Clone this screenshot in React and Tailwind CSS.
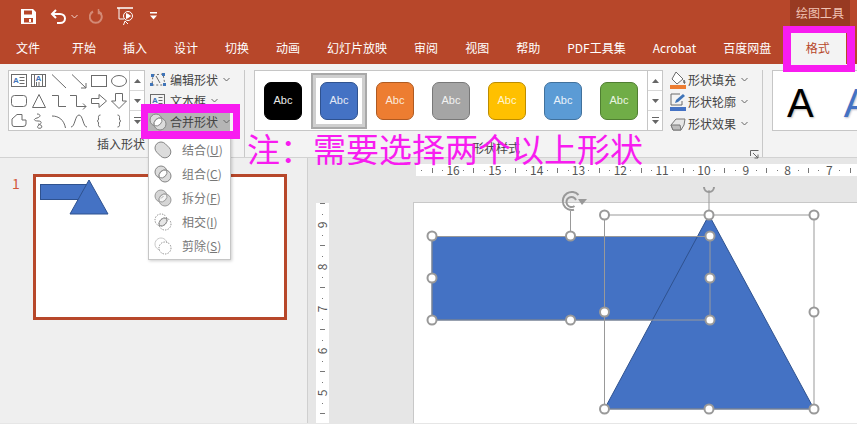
const tabs = ['开始', '插入', '设计', '切换', '动画', '幻灯片放映', '审阅', '视图', '帮助', 'PDF工具集', 'Acrobat', '百度网盘'];

const styleButtons = [
  { bg: 'bg-black border-black text-[#e8e8e8]' },
  { bg: 'bg-[#4472c4] border-[#2f528f] text-[#e4e9f5]', selected: true },
  { bg: 'bg-[#ed7d31] border-[#ae5a21] text-[#fbe9dc]' },
  { bg: 'bg-[#a5a5a5] border-[#787878] text-[#f2f2f2]' },
  { bg: 'bg-[#ffc000] border-[#bc8c00] text-[#fff5d0]' },
  { bg: 'bg-[#5b9bd5] border-[#41719c] text-[#e8f1fa]' },
  { bg: 'bg-[#70ad47] border-[#507e32] text-[#eaf4e2]' },
];

function Chevron({ className = '' }) {
  return (
    <svg width="7" height="5" viewBox="0 0 7 5" className={className}>
      <path d="M0.5 1 L3.5 4 L6.5 1" fill="none" stroke="#666" strokeWidth="1" />
    </svg>
  );
}

function Shape({ children }) {
  return (
    <div className="w-5 h-[20px] flex items-center justify-center">
      <svg width="20" height="20" viewBox="0 0 20 20" fill="none" stroke="#6b6b6b" strokeWidth="1">
        {children}
      </svg>
    </div>
  );
}

const galleryShapes = [
  <>
    <rect x="2.5" y="3.5" width="15" height="12" />
    <text x="4" y="12" fontSize="8" fontWeight="700" fill="#3f74b8" stroke="none" fontFamily="Liberation Sans">A</text>
    <path d="M10.5 6.5h5M10.5 9.5h5M10.5 12.5h5" />
  </>,
  <>
    <rect x="2.5" y="3.5" width="14" height="12" />
    <text x="6.5" y="10" fontSize="8" fontWeight="700" fill="#3f74b8" stroke="none" fontFamily="Liberation Sans">A</text>
    <path d="M5.5 4v11M7.5 11v4M10 11v4M13.5 4v11" />
  </>,
  <path d="M3 3.5 L17 17" />,
  <>
    <path d="M3 3.5 L17 17" />
    <path d="M17 12 V17 H12" />
  </>,
  <rect x="2.5" y="4.5" width="15" height="11" />,
  <ellipse cx="10" cy="10" rx="7.5" ry="5.5" />,
  <rect x="2.5" y="4.5" width="15" height="11" rx="3" />,
  <path d="M10 3.5 L16.5 16.5 H3.5 Z" />,
  <path d="M3 4.5 H9.5 V15.5 H17" />,
  <>
    <path d="M1 4.5 H7.5 V15.5 H17" />
    <path d="M14 12.5 L17 15.5 L14 18.5" />
  </>,
  <path d="M2.5 7.5 H10 V3.5 L17.5 10 L10 16.5 V12.5 H2.5 Z" />,
  <path d="M6.5 2.5 H13.5 V10 H17.5 L10 17.5 L2.5 10 H6.5 Z" />,
  <path d="M3 8 L8 3.5 H13 V9 H17 V13 Q17 15.5 14 15.5 H5 Q3 15.5 3 13 Z" />,
  <path d="M8 3 C12 3 12 6 8 7 C4 8 5 10 9 10 C13 10 13 12 10 14 C7 16 9 18 12 17 C14 16 12 13 9 13" />,
  <path d="M3 5 C10 5 15 9 16.5 17" />,
  <path d="M2 16 C6 16 6 4 10 4 C14 4 14 16 18 16" />,
  <path d="M11.5 4 C9 4 9.5 6 9.5 8 C9.5 9.5 8.5 10 8 10 C8.5 10 9.5 10.5 9.5 12 C9.5 14 9 16 11.5 16" />,
  <path d="M8.5 4 C11 4 10.5 6 10.5 8 C10.5 9.5 11.5 10 12 10 C11.5 10 10.5 10.5 10.5 12 C10.5 14 11 16 8.5 16" />,
];

function ScrollColumn() {
  return (
    <div className="w-[15px] h-[61px] flex flex-col border border-[#c6c6c6] border-l-0 bg-white">
      <div className="h-[20px] flex items-center justify-center border-b border-[#d8d8d8]">
        <svg width="7" height="4" viewBox="0 0 7 4"><path d="M3.5 0 L7 4 H0 Z" fill="#666" /></svg>
      </div>
      <div className="h-[20px] flex items-center justify-center border-b border-[#d8d8d8]">
        <svg width="7" height="4" viewBox="0 0 7 4"><path d="M0 0 H7 L3.5 4 Z" fill="#666" /></svg>
      </div>
      <div className="flex-1 flex flex-col items-center justify-center gap-[2px]">
        <div className="w-[7px] h-px bg-[#666]" />
        <svg width="7" height="4" viewBox="0 0 7 4"><path d="M0 0 H7 L3.5 4 Z" fill="#666" /></svg>
      </div>
    </div>
  );
}

function CommandRow({ icon, label, className = '', gap = 'mr-[3px]' }) {
  return (
    <div className={`h-[21px] flex items-center ${className}`}>
      <div className={`w-[19px] flex justify-center ${gap}`}>{icon}</div>
      <span className="text-xs text-[#444] whitespace-nowrap leading-none">{label}</span>
      <Chevron className="ml-[5px]" />
    </div>
  );
}

const lens = 'M12.74 5.26 A6 6 0 0 1 5.26 12.74 A6 6 0 0 1 12.74 5.26 Z';

function MergeIcon({ variant }) {
  const left = { cx: 7, cy: 7, r: 6 };
  const right = { cx: 11, cy: 11, r: 6 };
  return (
    <svg width="18" height="18" viewBox="0 0 18 18" fill="none" stroke="#858585" strokeWidth="1">
      {variant === 'union' && (
        <path d="M2.76 2.76 A6 6 0 0 1 11.24 2.76 L15.24 6.76 A6 6 0 0 1 6.76 15.24 L2.76 11.24 A6 6 0 0 1 2.76 2.76 Z" fill="#dcdcdc" />
      )}
      {variant === 'combine' && (
        <>
          <circle {...left} fill="#dcdcdc" />
          <circle {...right} fill="#dcdcdc" />
          <path d={lens} fill="#fff" />
        </>
      )}
      {variant === 'split' && (
        <>
          <circle {...left} fill="#d6d6d6" stroke="#999" />
          <circle {...right} fill="#d6d6d6" stroke="#999" />
          <path d={lens} fill="#f4f4f4" stroke="#999" />
          <path d="M7 9.5 L9.5 7" stroke="#aaa" />
        </>
      )}
      {variant === 'intersect' && (
        <>
          <circle {...left} strokeDasharray="1.3 1.3" />
          <circle {...right} strokeDasharray="1.3 1.3" />
          <path d={lens} fill="#e6e6e6" />
        </>
      )}
      {variant === 'subtract' && (
        <>
          <path d="M5.26 12.74 A6 6 0 1 1 12.74 5.26" stroke="#c8c8c8" />
          <circle {...right} strokeDasharray="1.3 1.3" />
        </>
      )}
    </svg>
  );
}

const mergeItems = [
  ['union', '结合', 'U'],
  ['combine', '组合', 'C'],
  ['split', '拆分', 'F'],
  ['intersect', '相交', 'I'],
  ['subtract', '剪除', 'S'],
];

const hHandles = [
  [432, 236], [570.5, 236], [710, 236], [432, 278], [710, 278], [432, 320], [570.5, 320], [710, 320],
  [604.5, 215], [709, 215], [814, 215], [604.5, 312], [814, 312], [604.5, 409], [709, 409], [814, 409],
];

function HTicks() {
  return (
    <>
      <div className="ml-[3.2px] w-px h-px bg-[#777]" />
      <div className="ml-[9.475px] w-px h-[5px] bg-[#777]" />
      <div className="ml-[9.475px] w-px h-px bg-[#777]" />
    </>
  );
}

function HorizontalRuler() {
  const numbers = [16, 15, 14, 13, 12, 11, 10, 9, 8, 7];
  return (
    <div className="ml-[108px] mt-[6px] h-[13px] bg-white flex items-center pl-[2px] text-xs text-[#555] leading-none">
      {numbers.map((n) => (
        <div key={n} className="flex items-center shrink-0">
          <HTicks />
          <div className="ml-[3.2px] w-[13.5px] text-center">{n}</div>
        </div>
      ))}
      <div className="ml-[3.2px] w-px h-px bg-[#777] shrink-0" />
      <div className="ml-[9.475px] w-px h-[5px] bg-[#777] shrink-0" />
    </div>
  );
}

function VerticalRuler() {
  const numbers = [9, 8, 7, 6, 5];
  return (
    <div className="w-[13px] h-[220px] bg-white flex flex-col items-center text-xs text-[#555] leading-none">
      {numbers.map((n) => (
        <div key={n} className="shrink-0 flex flex-col items-center">
          <div className="h-px w-[5px] bg-[#777]" />
          <div className="mt-[9.5px] h-px w-px bg-[#777]" />
          <div className="mt-1 h-3 -rotate-90">{n}</div>
          <div className="mt-1 h-px w-px bg-[#777]" />
          <div className="h-[9.5px]" />
        </div>
      ))}
      <div className="h-px w-[5px] bg-[#777] shrink-0" />
    </div>
  );
}

export default function App() {
  return (
    <div className="relative w-[857px] h-[424px] overflow-hidden bg-[#e6e6e6] font-['Noto_Sans_CJK_SC','Liberation_Sans',sans-serif]">
      {/* Title bar */}
      <div className="h-8 bg-[#b7472a] flex items-start justify-between">
        <div className="flex items-center h-8 pl-[21px]">
          <svg width="15" height="15" viewBox="0 0 15 15">
            <path fillRule="evenodd" d="M0 0 H12 L15 3 V15 H0 Z M3 1.5 V5.5 H11 V1.5 Z M3 9 V13.5 H12 V9 Z" fill="#fff" />
            <rect x="8" y="10" width="2" height="3" fill="#fff" />
          </svg>
          <svg width="16" height="15" viewBox="0 0 16 15" fill="none" stroke="#fff" strokeWidth="2" className="ml-[14px]">
            <path d="M6 1 L2 5 L6 9" />
            <path d="M2 5 H10 C13 5 15 7 15 9.5 C15 12 13 14 10 14 H7" />
          </svg>
          <svg width="7" height="5" viewBox="0 0 7 5" className="ml-[5px]">
            <path d="M0.5 1 L3.5 4 L6.5 1" fill="none" stroke="#f3d6cd" strokeWidth="1" />
          </svg>
          <svg width="14" height="15" viewBox="0 0 14 15" fill="none" stroke="#d38a76" strokeWidth="2" className="ml-[11px]">
            <path d="M4 2.5 A6 6 0 1 0 9.5 2.5" />
            <path d="M9.5 0 V4.5 H13" strokeWidth="1.5" />
          </svg>
          <svg width="17" height="19" viewBox="0 0 17 19" fill="none" stroke="#fff" strokeWidth="1" className="ml-[14px]">
            <path d="M0 1 H16" strokeWidth="1.5" />
            <path d="M2 1 V12 H7" />
            <circle cx="11" cy="9" r="4.5" />
            <path d="M9.5 6.5 L13.5 9 L9.5 11.5 Z" fill="#fff" />
            <path d="M8 14 L6.5 18 M8 14 L11 17" />
          </svg>
          <svg width="7" height="8" viewBox="0 0 7 8" className="ml-[16px]">
            <path d="M0 0 H7 V1.5 H0 Z M0 3.5 H7 L3.5 7.5 Z" fill="#fff" />
          </svg>
        </div>
        <div className="w-[60px] h-[26px] mr-[7px] bg-[#983a22] flex items-center justify-center text-xs text-[#f1c4b6] leading-none">
          绘图工具
        </div>
      </div>

      {/* Tabs */}
      <div className="h-8 bg-[#b7472a] flex items-center pl-4 text-xs text-white leading-none">
        <span>文件</span>
        <div className="flex items-center gap-[27px] ml-[32px]">
          {tabs.map((name) => (
            <span key={name} className="whitespace-nowrap">{name}</span>
          ))}
        </div>
        <div className="ml-[18px] w-[57px] h-8 bg-[#f3f3f3] text-[#b7472a] flex items-center justify-center">格式</div>
      </div>

      {/* Ribbon */}
      <div className="h-[94px] bg-[#f3f3f3] border-b border-[#d2d2d2] flex items-start pt-[6px] pl-2">
        <div className="w-[236px] h-[86px] flex flex-col">
          <div className="flex">
            <div className="flex">
              <div className="w-[122px] h-[61px] bg-white border border-[#c6c6c6] grid grid-cols-6 content-center">
                {galleryShapes.map((shape, i) => (
                  <Shape key={i}>{shape}</Shape>
                ))}
              </div>
              <ScrollColumn />
            </div>
            <div className="ml-[3px] flex flex-col -mt-[1px]">
              <CommandRow
                label="编辑形状"
                icon={
                  <svg width="16" height="14" viewBox="0 0 16 14" fill="none">
                    <path d="M3 2 L13 1 L15 12 L2 12 Z" stroke="#6b6b6b" strokeDasharray="2 2" />
                    <path d="M6 3 L10 10" stroke="#6b6b6b" />
                    <rect x="1" y="1" width="3" height="3" fill="#3f74b8" />
                    <rect x="12" y="0" width="3" height="3" fill="#3f74b8" />
                    <rect x="0" y="10" width="3" height="3" fill="#3f74b8" />
                    <rect x="13" y="10" width="3" height="3" fill="#3f74b8" />
                  </svg>
                }
              />
              <CommandRow
                label="文本框"
                icon={
                  <svg width="15" height="13" viewBox="0 0 15 13" fill="none" stroke="#6b6b6b">
                    <rect x="0.5" y="0.5" width="14" height="12" />
                    <text x="2" y="9" fontSize="8" fontWeight="700" fill="#3f74b8" stroke="none" fontFamily="Liberation Sans">A</text>
                    <path d="M8.5 3.5h4M8.5 6.5h4M8.5 9.5h4" />
                  </svg>
                }
              />
              <CommandRow
                className="bg-[#b5b5b5] !h-[19px] mt-px"
                label="合并形状"
                icon={<MergeIcon variant="combine" />}
              />
            </div>
          </div>
          <div className="w-[137px] flex justify-end mt-[1px] text-xs text-[#444] leading-[24px]">插入形状</div>
        </div>
        <div className="w-px h-[87px] bg-[#c8c8c8]" />

        <div className="w-[508px] h-[86px] ml-[9px] flex flex-col">
          <div className="flex">
            <div className="w-[394px] h-[61px] bg-white border border-[#c6c6c6] flex items-center">
              {styleButtons.map((b, i) => (
                <div
                  key={i}
                  className={`w-[56px] h-[56px] flex items-center justify-center shrink-0 ${
                    b.selected ? 'border-2 border-[#a9a9a9] outline outline-[3px] -outline-offset-[5px] outline-[#cfcfcf]' : ''
                  }`}
                >
                  <div
                    className={`w-[38px] h-[38px] rounded-[7px] border flex items-center justify-center text-[11px] font-['Liberation_Sans',sans-serif] ${b.bg}`}
                  >
                    Abc
                  </div>
                </div>
              ))}
            </div>
            <ScrollColumn />
            <div className="ml-[5px] flex flex-col -mt-[1px] gap-[1px]">
              <CommandRow
                gap="mr-px"
                label="形状填充"
                icon={
                  <svg width="16" height="18" viewBox="0 0 16 18" fill="none" stroke="#6b6b6b">
                    <path d="M6 1 L13 8 L7 13 L2 8 Z" fill="#fff" />
                    <path d="M14 9 C15 11 15.5 12 14.5 12.5 C13.5 12 13.5 11 14 9 Z" fill="#6b6b6b" />
                    <rect x="0" y="14" width="16" height="4" fill="#ed7d31" stroke="none" />
                  </svg>
                }
              />
              <CommandRow
                gap="mr-px"
                label="形状轮廓"
                icon={
                  <svg width="16" height="18" viewBox="0 0 16 18" fill="none">
                    <path d="M1 1 H10 M1 1 V12 H12 V8" stroke="#6b6b6b" />
                    <path d="M5 10 L6 7 L13 1 L15 3 L8 9 Z" fill="#3f74b8" />
                    <rect x="0" y="14" width="16" height="4" fill="#4472c4" />
                  </svg>
                }
              />
              <CommandRow
                gap="mr-px"
                label="形状效果"
                icon={
                  <svg width="16" height="14" viewBox="0 0 16 14">
                    <path d="M1 8 L6 2 H15 L14 8 L11 13 H3 Z" fill="#e6e6e6" stroke="#777" />
                    <path d="M3 13 L1 8 H10 L11 13 Z" fill="#bdbdbd" stroke="#777" />
                  </svg>
                }
              />
            </div>
          </div>
          <div className="relative w-[494px]">
            <div className="text-center pr-[10px] text-xs text-[#444] leading-[27px]">形状样式</div>
            <svg width="9" height="9" viewBox="0 0 9 9" fill="none" stroke="#666" className="absolute right-[-11px] top-[16px]">
              <path d="M0.5 6 V0.5 H8.5" />
              <path d="M3 3 L8 8 M8 4.5 V8 H4.5" />
            </svg>
          </div>
        </div>
        <div className="w-px h-[87px] bg-[#c8c8c8]" />

        <div className="ml-[9px] flex-1 h-[61px] bg-white border border-[#c6c6c6] border-r-0 flex items-center pt-[5px] overflow-hidden font-['Liberation_Sans',sans-serif] text-[40px] leading-none">
          <span className="ml-[14px] text-black [text-shadow:1px_1px_2px_#bbb]">A</span>
          <span className="ml-[30px] text-[#4472c4] [text-shadow:1px_1px_2px_#bbc]">A</span>
        </div>
      </div>

      {/* Workspace */}
      <div className="h-[265px] flex">
        <div className="w-[308px] bg-[#efefef] border-r border-[#cfcfcf] flex items-start pt-[16px] pl-[12px]">
          <span className="w-[21px] text-sm leading-[18px] text-[#d2583a]">1</span>
          <div className="w-[254px] h-[146px] bg-white border-[3px] border-[#b7472a]">
            <svg width="248" height="140" viewBox="0 0 248 140">
              <rect x="4.5" y="7.5" width="50" height="15" fill="#4472c4" stroke="#2f528f" />
              <path d="M53 3 L72 37 H34 Z" fill="#4472c4" stroke="#2f528f" />
            </svg>
          </div>
        </div>
        <div className="flex-1 flex flex-col min-w-0">
          <HorizontalRuler />
          <div className="flex flex-1 mt-[27px] pl-2">
            <VerticalRuler />
            <div className="ml-[84px] -mt-px flex-1 bg-white border-l border-t border-[#c8c8c8]" />
          </div>
        </div>
      </div>

      {/* Selected shapes on the slide */}
      <svg className="absolute left-0 top-0 pointer-events-none" width="857" height="424" viewBox="0 0 857 424">
        <rect x="432" y="236.5" width="278" height="83.5" fill="#4472c4" stroke="#2f528f" />
        <path d="M709 215 L814 409 H604.5 Z" fill="#4472c4" stroke="#2f528f" />
        <g fill="none" stroke="#999" strokeWidth="1">
          <rect x="432" y="236.5" width="278" height="83.5" />
          <rect x="604.5" y="215" width="209.5" height="194" />
          <path d="M570.5 211 V236 M709 190 V215" />
          <path d="M704 187 A5 5 0 0 0 714 187" strokeWidth="2" />
          <path d="M578.5 195 A9 9 0 1 0 574 209.7" strokeWidth="2" />
          <path d="M574.5 206 A5 5 0 1 1 576 200" strokeWidth="2" />
          <path d="M578 199 H587 L582 205 Z" fill="#999" stroke="none" />
        </g>
        {hHandles.map(([x, y]) => (
          <circle key={`${x}-${y}`} cx={x} cy={y} r="4.5" fill="#fff" stroke="#999" strokeWidth="2" />
        ))}
      </svg>

      {/* Merge shapes dropdown */}
      <div className="absolute left-[148px] top-[136px] w-[83px] h-[124px] bg-white border border-[#c6c6c6] shadow-[1px_1px_3px_rgba(0,0,0,0.2)] flex flex-col pt-px">
        {mergeItems.map(([variant, label, key]) => (
          <div key={key} className="h-6 flex items-center pl-[5px] text-xs text-[#777] leading-none">
            <MergeIcon variant={variant} />
            <span className="ml-[10px] whitespace-nowrap">
              {label}(<span className="underline">{key}</span>)
            </span>
          </div>
        ))}
      </div>

      {/* Annotation over the screenshot */}
      <div className="absolute left-[141px] top-[104px] w-[99px] h-[35px] border-x-[7px] border-t-[9px] border-b-[8px] border-[#f81cf0]" />
      <div className="absolute left-[783px] top-[26px] w-[72px] h-[46px] border-x-[8px] border-t-[7px] border-b-[7px] border-[#f81cf0]" />
      <div className="absolute left-[247px] top-[126px] text-[33px] leading-[44px] text-[#f81cf0] whitespace-nowrap">
        注：需要选择两个以上形状
      </div>
    </div>
  );
}
